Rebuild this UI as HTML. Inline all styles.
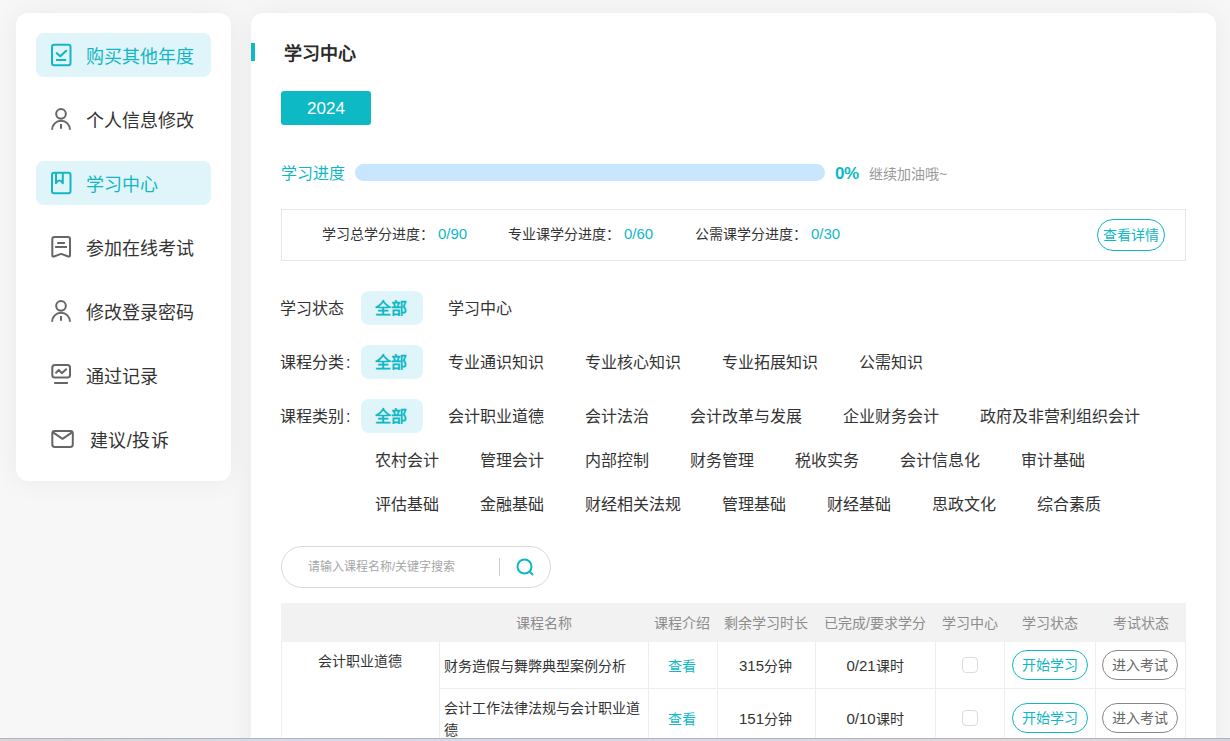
<!DOCTYPE html>
<html lang="zh-CN">
<head>
<meta charset="utf-8">
<title>学习中心</title>
<style>
*{box-sizing:border-box;margin:0;padding:0}
html,body{width:1230px;height:741px;overflow:hidden}
body{position:relative;background:#f7f7f7;font-family:"Liberation Sans",sans-serif;color:#333;font-size:14px}
.abs{position:absolute}
/* sidebar */
#side{left:16px;top:13px;width:215px;height:468px;background:#fff;border-radius:12px;box-shadow:0 0 28px rgba(0,0,0,.06)}
.nav{position:absolute;left:20px;width:175px;height:44px;border-radius:8px;font-size:18px;line-height:48px;color:#333;white-space:nowrap}
.nav.on{background:#dff5fa;color:#14b6c3}
.nav svg{position:absolute;left:14px;top:10px;width:24px;height:24px;fill:none;stroke:#666;stroke-width:2;stroke-linecap:round;stroke-linejoin:round;overflow:visible}
.nav.on svg{stroke:#14b6c3}
.nav span{position:absolute;left:50px;top:0;height:44px}
/* main */
#main{left:251px;top:13px;width:965px;height:760px;background:#fff;border-radius:12px 12px 0 0;box-shadow:0 0 28px rgba(0,0,0,.06)}
#tbar{left:0;top:30px;width:4px;height:18px;background:#0eb8c5}
#title{left:33px;top:29px;font-size:18px;font-weight:bold;line-height:24px;color:#2a2a2a}
#year{left:30px;top:78px;width:90px;height:34px;background:#0eb9c6;border-radius:3px;color:#fff;font-size:17px;line-height:35px;text-align:center}
#plabel{left:30px;top:148px;font-size:16px;line-height:26px;color:#0eb8c5}
#pbar{left:104px;top:151px;width:470px;height:17px;border-radius:9px;background:#c8e6fd}
#pct{left:584px;top:149px;letter-spacing:-.5px;font-size:17px;font-weight:bold;line-height:24px;color:#0eb8c5}
#cheer{left:618px;top:149px;font-size:14px;line-height:24px;color:#999}
#info{left:30px;top:196px;width:905px;height:52px;border:1px solid #e6e6e6;font-size:14px;line-height:50px;white-space:nowrap}
#info span{position:absolute;top:-1px}
#info .v{color:#0eb8c5;font-size:15px}
#detail{left:815px;top:9px;width:68px;height:32px;border:1px solid #0eb8c5;border-radius:16px;color:#0eb8c5;font-size:14px;line-height:30px;text-align:center}
.flabel{position:absolute;left:29px;font-size:16px;line-height:36px;color:#333;white-space:nowrap}
.flabel i{font-style:normal;margin-left:2px}
.frow{position:absolute;left:110px;width:840px;font-size:16px;line-height:36px;color:#333}
.frow span{float:left;height:34px;padding:0 16px 0 14px;margin:0 11px 10px 0;border-radius:8px;white-space:nowrap}
.frow span.on{background:#dff5fa;color:#0eb8c5;font-weight:bold}
#search{left:30px;top:533px;width:270px;height:42px;border:1px solid #d9d9d9;border-radius:21px}
#search .ph{position:absolute;left:26px;top:0;font-size:12px;line-height:41px;color:#a6a6a6;white-space:nowrap}
#search .dv{position:absolute;left:217px;top:11px;width:1px;height:18px;background:#ccc}
#search svg{position:absolute;left:233px;top:10px;width:20px;height:20px;fill:none;stroke:#0eb8c5;stroke-width:2;stroke-linecap:round}
/* table */
#thead{left:30px;top:590px;width:905px;height:39px;background:#f2f2f2;font-size:14px;color:#8c8c8c}
.c{position:absolute;text-align:center;white-space:nowrap}
#thead .c{top:0;line-height:40px}
.cell{position:absolute;border-left:1px solid #eee;border-bottom:1px solid #eee}
.pill{position:absolute;height:30px;border:1px solid #0eb8c5;border-radius:15px;color:#0eb8c5;font-size:14px;line-height:29px;text-align:center;white-space:nowrap}
.pill.g{border-color:#888;color:#666}
.chk{position:absolute;width:16px;height:16px;border:1px solid #dcdcdc;border-radius:4px;background:#fff}
.lnk{color:#0eb8c5}
.n{font-size:15px;font-weight:normal;font-style:normal}
#strip{left:0;top:738px;width:1230px;height:3px;border-top:1px solid #b3b3b8;background:linear-gradient(90deg,#dad4d8 0,#d0dcee 25%,#d4d8ea 60%,#e2d8da 82%,#d3d3e4 100%)}
</style>
</head>
<body>
<div id="side" class="abs">
  <div class="nav on" style="top:20px"><svg viewBox="0 0 24 24"><rect x="2" y="1.700" width="18.500" height="20.500" rx="2.200"/><path d="M6.800 10.200L10.300 13.300 16.200 7.800" stroke-width="2.200"/><path d="M7 17h8.200" stroke-linecap="square"/></svg><span>购买其他年度</span></div>
  <div class="nav" style="top:84px"><svg viewBox="0 0 24 24"><circle cx="11" cy="6.800" r="4.850"/><path d="M2.100 22.700A8.950 8.950 0 0 1 20 22.700M11 17.100V21.800" stroke-linecap="butt"/></svg><span>个人信息修改</span></div>
  <div class="nav on" style="top:148px"><svg viewBox="0 0 24 24"><rect x="2" y="1.700" width="18.500" height="20.500" rx="2.200"/><path d="M6 2.500V12.200Q9.400 6.600 12.800 12.200V2.500"/></svg><span>学习中心</span></div>
  <div class="nav" style="top:212px"><svg viewBox="0 0 24 24"><path d="M4.300 2H18a2 2 0 0 1 2 2V20.300Q20 22 18.400 21.500L11.150 18.900 3.900 21.500Q2.300 22 2.300 20.300V4a2 2 0 0 1 2-2z"/><path d="M8.200 8H13.900M6.100 12H16" stroke-linecap="square"/></svg><span>参加在线考试</span></div>
  <div class="nav" style="top:276px"><svg viewBox="0 0 24 24"><circle cx="11" cy="6.800" r="4.850"/><path d="M2.100 22.700A8.950 8.950 0 0 1 20 22.700M11 17.100V21.800" stroke-linecap="butt"/></svg><span>修改登录密码</span></div>
  <div class="nav" style="top:340px"><svg viewBox="0 0 24 24"><rect x="2.300" y="2" width="17.700" height="12.600" rx="2.600"/><path d="M6.100 9.800L8.800 6.900 11.800 10.200 16.100 6.200"/><path d="M5.200 20H16.900" stroke-linecap="square"/></svg><span>通过记录</span></div>
  <div class="nav" style="top:404px"><svg viewBox="0 0 24 24"><rect x="2.300" y="4" width="20.500" height="15.900" rx="2.400"/><path d="M3.400 5.600L12.550 11.800 21.700 5.600"/></svg><span style="left:54px;letter-spacing:.4px">建议/投诉</span></div>
</div>

<div id="main" class="abs">
  <div id="tbar" class="abs"></div>
  <div id="title" class="abs">学习中心</div>
  <div id="year" class="abs">2024</div>
  <div id="plabel" class="abs">学习进度</div>
  <div id="pbar" class="abs"></div>
  <div id="pct" class="abs">0%</div>
  <div id="cheer" class="abs">继续加油哦~</div>
  <div id="info" class="abs">
    <span style="left:40px">学习总学分进度：</span><span class="v" style="left:156px">0/90</span>
    <span style="left:226px">专业课学分进度：</span><span class="v" style="left:342px">0/60</span>
    <span style="left:413px">公需课学分进度：</span><span class="v" style="left:529px">0/30</span>
    <div id="detail" class="abs">查看详情</div>
  </div>

  <div class="flabel" style="top:278px">学习状态</div>
  <div class="frow" style="top:278px"><span class="on">全部</span><span>学习中心</span></div>
  <div class="flabel" style="top:332px">课程分类<i>:</i></div>
  <div class="frow" style="top:332px"><span class="on">全部</span><span>专业通识知识</span><span>专业核心知识</span><span>专业拓展知识</span><span>公需知识</span></div>
  <div class="flabel" style="top:386px">课程类别<i>:</i></div>
  <div class="frow" style="top:386px"><span class="on">全部</span><span>会计职业道德</span><span>会计法治</span><span>会计改革与发展</span><span>企业财务会计</span><span>政府及非营利组织会计</span><span>农村会计</span><span>管理会计</span><span>内部控制</span><span>财务管理</span><span>税收实务</span><span>会计信息化</span><span>审计基础</span><span>评估基础</span><span>金融基础</span><span>财经相关法规</span><span>管理基础</span><span>财经基础</span><span>思政文化</span><span>综合素质</span></div>

  <div id="search" class="abs"><span class="ph">请输入课程名称/关键字搜索</span><i class="dv"></i><svg viewBox="0 0 20 20"><circle cx="9.500" cy="9.500" r="7"/><path d="M14.500 14.500l3 3"/></svg></div>

  <div id="thead" class="abs">
    <div class="c" style="left:158px;width:209px">课程名称</div>
    <div class="c" style="left:367px;width:68px">课程介绍</div>
    <div class="c" style="left:435px;width:99px">剩余学习时长</div>
    <div class="c" style="left:534px;width:120px">已完成/要求学分</div>
    <div class="c" style="left:654px;width:69px">学习中心</div>
    <div class="c" style="left:723px;width:91px">学习状态</div>
    <div class="c" style="left:814px;width:91px">考试状态</div>
  </div>

  <!-- table body -->
  <div id="tbody" class="abs" style="left:30px;top:628px;width:905px;height:140px;font-size:14px;color:#333">
    <div class="abs" style="left:0;top:0;width:1px;height:120px;background:#eee"></div>
    <div class="c" style="left:0;top:8px;width:158px;line-height:24px">会计职业道德</div>
    <!-- row 1 -->
    <div class="cell" style="left:158px;top:0;width:209px;height:48px"></div>
    <div class="cell" style="left:367px;top:0;width:68px;height:48px"></div>
    <div class="cell" style="left:436px;top:0;width:98px;height:48px"></div>
    <div class="cell" style="left:534px;top:0;width:120px;height:48px"></div>
    <div class="cell" style="left:654px;top:0;width:69px;height:48px"></div>
    <div class="cell" style="left:723px;top:0;width:91px;height:48px"></div>
    <div class="cell" style="left:814px;top:0;width:91px;height:48px;border-right:1px solid #eee"></div>
    <div class="c" style="left:163px;top:13px;text-align:left;line-height:24px">财务造假与舞弊典型案例分析</div>
    <div class="c lnk" style="left:367px;top:13px;width:68px;line-height:24px">查看</div>
    <div class="c" style="left:435px;top:13px;width:99px;line-height:24px"><i class="n">315</i>分钟</div>
    <div class="c" style="left:534px;top:13px;width:120px;line-height:24px"><i class="n">0/21</i>课时</div>
    <div class="chk" style="left:681px;top:16px"></div>
    <div class="pill" style="left:731px;top:9px;width:76px">开始学习</div>
    <div class="pill g" style="left:821px;top:9px;width:76px">进入考试</div>
    <!-- row 2 -->
    <div class="cell" style="left:158px;top:48px;width:209px;height:60px"></div>
    <div class="cell" style="left:367px;top:48px;width:68px;height:60px"></div>
    <div class="cell" style="left:436px;top:48px;width:98px;height:60px"></div>
    <div class="cell" style="left:534px;top:48px;width:120px;height:60px"></div>
    <div class="cell" style="left:654px;top:48px;width:69px;height:60px"></div>
    <div class="cell" style="left:723px;top:48px;width:91px;height:60px"></div>
    <div class="cell" style="left:814px;top:48px;width:91px;height:60px;border-right:1px solid #eee"></div>
    <div class="c" style="left:163px;top:56px;width:200px;text-align:left;line-height:22px;white-space:normal">会计工作法律法规与会计职业道德</div>
    <div class="c lnk" style="left:367px;top:66px;width:68px;line-height:24px">查看</div>
    <div class="c" style="left:435px;top:66px;width:99px;line-height:24px"><i class="n">151</i>分钟</div>
    <div class="c" style="left:534px;top:66px;width:120px;line-height:24px"><i class="n">0/10</i>课时</div>
    <div class="chk" style="left:681px;top:69px"></div>
    <div class="pill" style="left:731px;top:62px;width:76px">开始学习</div>
    <div class="pill g" style="left:821px;top:62px;width:76px">进入考试</div>
  </div>
</div>
<div id="strip" class="abs"></div>
</body>
</html>
